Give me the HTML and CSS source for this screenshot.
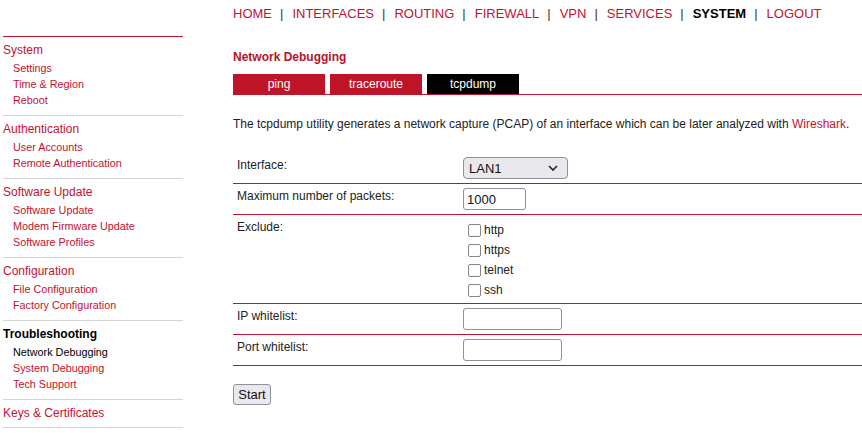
FILE: index.html
```html
<!DOCTYPE html>
<html>
<head>
<meta charset="utf-8">
<title>Network Debugging</title>
<link rel="stylesheet" href="styles.css">
</head>
<body>
<div class="page">
  <aside class="sidebar">
    <div class="sb-section sb-first">
      <a class="sb-head">System</a>
      <a class="sb-item">Settings</a>
      <a class="sb-item">Time &amp; Region</a>
      <a class="sb-item">Reboot</a>
    </div>
    <div class="sb-section">
      <a class="sb-head">Authentication</a>
      <a class="sb-item">User Accounts</a>
      <a class="sb-item">Remote Authentication</a>
    </div>
    <div class="sb-section">
      <a class="sb-head">Software Update</a>
      <a class="sb-item">Software Update</a>
      <a class="sb-item">Modem Firmware Update</a>
      <a class="sb-item">Software Profiles</a>
    </div>
    <div class="sb-section">
      <a class="sb-head">Configuration</a>
      <a class="sb-item">File Configuration</a>
      <a class="sb-item">Factory Configuration</a>
    </div>
    <div class="sb-section">
      <a class="sb-head sb-active">Troubleshooting</a>
      <a class="sb-item sb-current">Network Debugging</a>
      <a class="sb-item">System Debugging</a>
      <a class="sb-item">Tech Support</a>
    </div>
    <div class="sb-section sb-last">
      <a class="sb-head">Keys &amp; Certificates</a>
    </div>
  </aside>
  <main class="main">
    <nav class="topnav">
      <a class="nav-link">HOME</a><span class="sep">|</span><a class="nav-link">INTERFACES</a><span class="sep">|</span><a class="nav-link">ROUTING</a><span class="sep">|</span><a class="nav-link">FIREWALL</a><span class="sep">|</span><a class="nav-link">VPN</a><span class="sep">|</span><a class="nav-link">SERVICES</a><span class="sep">|</span><a class="nav-link nav-active">SYSTEM</a><span class="sep">|</span><a class="nav-link">LOGOUT</a>
    </nav>
    <h1 class="title">Network Debugging</h1>
    <div class="tabs">
      <a class="tab">ping</a>
      <a class="tab">traceroute</a>
      <a class="tab tab-active">tcpdump</a>
    </div>
    <p class="intro">The tcpdump utility generates a network capture (PCAP) of an interface which can be later analyzed with <a class="link">Wireshark</a>.</p>
    <div class="form">
      <div class="row">
        <div class="label">Interface:</div>
        <div class="field">
          <div class="select-wrap">
            <select class="select"><option>LAN1</option></select>
            <svg class="chev" width="10" height="6" viewBox="0 0 10 6"><path d="M1 1 L5 5 L9 1" fill="none" stroke="#222" stroke-width="1.6"/></svg>
          </div>
        </div>
      </div>
      <div class="row">
        <div class="label">Maximum number of packets:</div>
        <div class="field"><input class="input input-num" type="text" value="1000"></div>
      </div>
      <div class="row">
        <div class="label">Exclude:</div>
        <div class="field checks">
          <label class="check"><input class="cb" type="checkbox"><span>http</span></label>
          <label class="check"><input class="cb" type="checkbox"><span>https</span></label>
          <label class="check"><input class="cb" type="checkbox"><span>telnet</span></label>
          <label class="check"><input class="cb" type="checkbox"><span>ssh</span></label>
        </div>
      </div>
      <div class="row">
        <div class="label">IP whitelist:</div>
        <div class="field"><input class="input input-wide" type="text"></div>
      </div>
      <div class="row">
        <div class="label">Port whitelist:</div>
        <div class="field"><input class="input input-wide" type="text"></div>
      </div>
    </div>
    <button class="btn" type="button">Start</button>
  </main>
</div>
</body>
</html>
```
FILE: styles.css
```css
html, body {
  margin: 0;
  padding: 0;
  background: #ffffff;
}
body {
  font-family: "Liberation Sans", Arial, sans-serif;
  font-size: 12px;
  color: #222222;
}
.page {
  display: flex;
  align-items: flex-start;
  padding-left: 3px;
}
.sidebar {
  width: 180px;
  flex: none;
  padding-top: 36px;
}
.sb-section {
  border-top: 1px solid #d4d4d4;
  padding: 4px 0 7px;
  display: flex;
  flex-direction: column;
}
.sb-first {
  border-top-color: #c0132d;
}
.sb-last {
  padding-bottom: 4px;
  border-bottom: 1px solid #d4d4d4;
}
.sb-head {
  font-size: 12px;
  line-height: 19px;
  color: #c8102e;
}
.sb-active {
  color: #000000;
  font-weight: bold;
}
.sb-item {
  font-size: 10.8px;
  line-height: 16px;
  padding-left: 10px;
  color: #c8102e;
}
.sb-current {
  color: #000000;
}
.main {
  flex: 1;
  margin-left: 50px;
  min-width: 0;
}
.topnav {
  height: 28px;
  line-height: 28px;
  font-size: 13px;
  white-space: nowrap;
}
.nav-link {
  color: #c8102e;
}
.nav-active {
  color: #000000;
  font-weight: bold;
}
.sep {
  color: #333333;
  margin: 0 9px 0 8px;
}
.title {
  margin: 21px 0 0;
  font-size: 12px;
  line-height: 16px;
  font-weight: bold;
  color: #b8122c;
}
.tabs {
  margin-top: 9px;
  display: flex;
  gap: 5px;
  border-bottom: 1px solid #c0132d;
}
.tab {
  width: 92px;
  height: 20px;
  line-height: 20px;
  text-align: center;
  background: #be1428;
  color: #ffffff;
  font-size: 12px;
}
.tab-active {
  background: #000000;
}
.intro {
  margin: 21px 0 0;
  line-height: 16px;
  white-space: nowrap;
}
.link {
  color: #c8102e;
}
.form {
  margin-top: 21px;
}
.row {
  display: grid;
  grid-template-columns: 230px 1fr;
  border-bottom: 1px solid #c0132d;
}
.label {
  padding: 5px 0 0 4px;
  line-height: 14px;
}
.field {
  padding: 4px 0;
  display: flex;
  align-items: flex-start;
}
.select-wrap {
  position: relative;
  width: 105px;
  height: 22px;
}
.select {
  appearance: none;
  -webkit-appearance: none;
  width: 105px;
  height: 22px;
  box-sizing: border-box;
  margin: 0;
  padding: 0 0 0 5px;
  border: 1px solid #8f8f9d;
  border-radius: 4px;
  background: #e9e9ed;
  color: #111111;
  font-family: "Liberation Sans", Arial, sans-serif;
  font-size: 13px;
}
.chev {
  position: absolute;
  right: 10px;
  top: 8px;
  pointer-events: none;
}
.input {
  height: 22px;
  box-sizing: border-box;
  margin: 0;
  padding: 0 3px;
  border: 1px solid #8f8f9d;
  border-radius: 3px;
  background: #ffffff;
  color: #111111;
  font-family: "Liberation Sans", Arial, sans-serif;
  font-size: 13px;
}
.input-num {
  width: 63px;
}
.input-wide {
  width: 99px;
}
.checks {
  flex-direction: column;
  padding: 5px 0 3px;
}
.check {
  height: 20px;
  display: flex;
  align-items: center;
}
.cb {
  appearance: none;
  -webkit-appearance: none;
  box-sizing: border-box;
  margin: 0 3px 0 5px;
  width: 13px;
  height: 13px;
  border: 1px solid #858585;
  border-radius: 2px;
  background: #ffffff;
}
.btn {
  margin-top: 18px;
  width: 38px;
  height: 21px;
  box-sizing: border-box;
  padding: 0;
  border: 1px solid #8f8f9d;
  border-radius: 3px;
  background: #e9e9ed;
  color: #111111;
  font-family: "Liberation Sans", Arial, sans-serif;
  font-size: 13px;
}
```
